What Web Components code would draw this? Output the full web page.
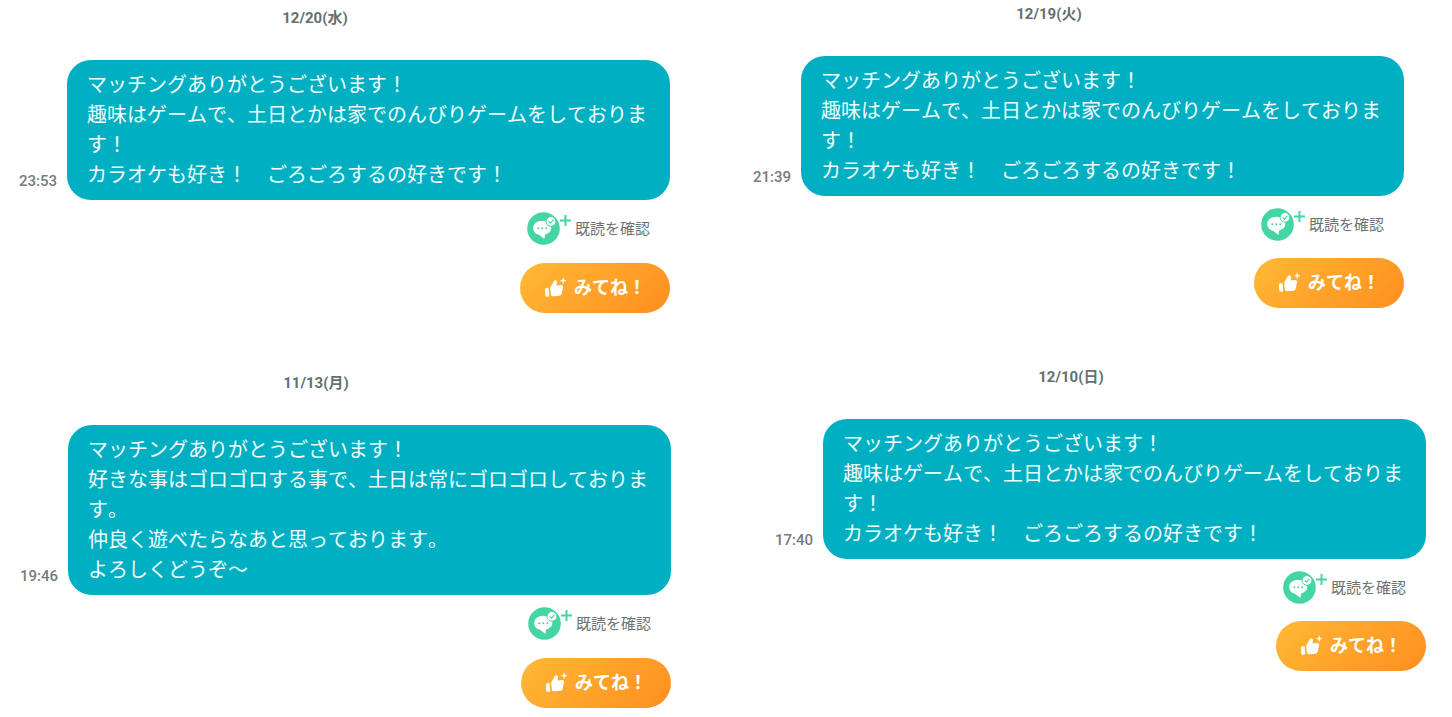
<!DOCTYPE html>
<html lang="ja">
<head>
<meta charset="utf-8">
<meta name="viewport" content="width=device-width, initial-scale=1">
<title>メッセージ</title>
<style>
  body { margin: 0; background: #fff; font-family: Roboto, "Noto Sans CJK JP", sans-serif; }
</style>
</head>
<body>
<message-board>
  <thread-column>
    <message-thread date="12/20(水)" time="23:53">マッチングありがとうございます！
趣味はゲームで、土日とかは家でのんびりゲームをしております！
カラオケも好き！　ごろごろするの好きです！</message-thread>
    <message-thread class="b" date="11/13(月)" time="19:46">マッチングありがとうございます！
好きな事はゴロゴロする事で、土日は常にゴロゴロしております。
仲良く遊べたらなあと思っております。
よろしくどうぞ～</message-thread>
  </thread-column>
  <thread-column class="right">
    <message-thread class="c" date="12/19(火)" time="21:39">マッチングありがとうございます！
趣味はゲームで、土日とかは家でのんびりゲームをしております！
カラオケも好き！　ごろごろするの好きです！</message-thread>
    <message-thread class="d" date="12/10(日)" time="17:40">マッチングありがとうございます！
趣味はゲームで、土日とかは家でのんびりゲームをしております！
カラオケも好き！　ごろごろするの好きです！</message-thread>
  </thread-column>
</message-board>

<script>
function define(name, html, setup) {
  const template = document.createElement('template');
  template.innerHTML = html;
  customElements.define(name, class extends HTMLElement {
    constructor() {
      super();
      this.attachShadow({ mode: 'open' }).append(template.content.cloneNode(true));
    }
    connectedCallback() { if (setup) setup(this, this.shadowRoot); }
  });
}

define('message-board', `
<style>
  :host { display: grid; grid-template-columns: 1fr 1fr; align-items: start; }
</style>
<slot></slot>`);

define('thread-column', `
<style>
  :host { display: flex; flex-direction: column; gap: 60px; padding: 8px 0; min-width: 0; }
  :host(.right) { gap: 59px; padding-top: 4px; --action-gap: 17px; }
</style>
<slot></slot>`);

define('read-check', `
<style>
  :host { display: block; }
  button { display: flex; align-items: center; gap: 3px; height: 33px; margin: 0; padding: 0; border: 0;
    background: none; color: #6a7272; font: 400 15px/20px "Noto Sans CJK JP", sans-serif; cursor: pointer; }
  svg { display: block; }
  span { padding-bottom: 2px; }
</style>
<button type="button">
  <svg width="45" height="33" viewBox="0 0 45 33" aria-hidden="true">
    <circle cx="16.5" cy="16.5" r="16.3" fill="#45d5a2"/>
    <path d="M15.300 8.700c-5.200 0-9.100 3-9.100 7.200 0 3.600 2.600 6.200 6.200 7l4.300 3.600c.4.3.8.1.9-.4l.6-3.600c3.500-1.200 6.100-3.400 6.100-6.600 0-4.200-3.800-7.200-9-7.200z" fill="#fff"/>
    <g fill="#45d5a2"><circle cx="11.300" cy="16.200" r="1"/><circle cx="15.300" cy="16.200" r="1"/><circle cx="19.300" cy="16.200" r="1"/></g>
    <circle cx="24" cy="9.400" r="4.900" fill="#fff" stroke="#45d5a2" stroke-width="1"/>
    <path d="M21.700 9.400l1.800 1.800 3-3.500" fill="none" stroke="#45d5a2" stroke-width="1.100"/>
    <path d="M38.500 3v11M33 8.500h11" fill="none" stroke="#45d5a2" stroke-width="2"/>
  </svg>
  <span>既読を確認</span>
</button>`);

define('look-button', `
<style>
  :host { display: block; }
  button { display: flex; align-items: center; justify-content: center; gap: 7px; width: 150px; height: 50px;
    margin: 0; padding: 0; border: 0; border-radius: 25px; color: #fff; cursor: pointer;
    background: linear-gradient(135deg, #ffb935 0%, #ffa32a 50%, #ff8f20 100%);
    font: 700 18px/24px "Noto Sans CJK JP", sans-serif; }
  svg { display: block; }
  span { padding-bottom: 4px; }
</style>
<button type="button">
  <svg width="23" height="22" viewBox="0 0 23 22" fill="#fff" aria-hidden="true">
    <path d="M2.200 11.200l1.700-.2c.4 0 .7.200.7.600l.7 7.300c0 .4-.2.700-.6.700l-1.600.2c-1 .1-1.700-.4-1.800-1.400L.9 13c-.1-1 .3-1.700 1.300-1.800z"/>
    <path d="M6.300 10.300L9.700 4.600c.5-1 1.300-1.500 2.200-1.100 1 .4 1.300 1.300 1.100 2.300l-.5 2.600 4.700-.3c1.300 0 2.100.9 1.900 2.100l-1.500 6.500c-.3 1.200-1.100 1.900-2.300 2l-6.300.5c-1.200.1-2-.6-2.100-1.700L6.200 11.500c0-.4 0-.8.1-1.200z"/>
    <path d="M19.200.8c.2 1.900.9 2.700 2.800 2.900-1.900.2-2.600 1-2.800 2.900-.2-1.900-.9-2.700-2.800-2.900 1.900-.2 2.600-1 2.800-2.900z" stroke="#fff" stroke-width=".5"/>
  </svg>
  <span>みてね！</span>
</button>`);

define('message-thread', `
<style>
  :host { display: flex; flex-direction: column; align-items: flex-end; box-sizing: border-box; padding: 0 56px 0 19px; }
  :host(.b) { padding: 0 55px 0 20px; }
  :host(.c) { padding: 0 48px 0 27px; }
  :host(.d) { padding: 0 26px 0 49px; }
  .date { align-self: stretch; margin: 0 59px 32px 0; text-align: center; color: #667070;
    font-size: 15px; line-height: 20px; font-weight: 700; }
  .row { display: flex; align-items: flex-end; align-self: stretch; gap: 10px; }
  .sent { flex: none; width: 38px; padding-bottom: 9px; color: #747c7c; font-size: 15px; line-height: 20px; font-weight: 500; }
  .bubble { flex: 1; min-width: 0; margin: 0; box-sizing: border-box; padding: 9px 20px 11px; border-radius: 24px;
    background: #00afc2; color: #f2ffff; white-space: pre-line; overflow-wrap: anywhere;
    font: 400 20px/30px "Noto Sans CJK JP", sans-serif; font-kerning: none; }
  read-check { margin: 12px 20px var(--action-gap, 18px) 0; }
</style>
<time class="date"></time>
<div class="row"><time class="sent"></time><p class="bubble"><slot></slot></p></div>
<read-check></read-check>
<look-button></look-button>`, (host, root) => {
  root.querySelector('.date').textContent = host.getAttribute('date');
  root.querySelector('.sent').textContent = host.getAttribute('time');
});
</script>
</body>
</html>
